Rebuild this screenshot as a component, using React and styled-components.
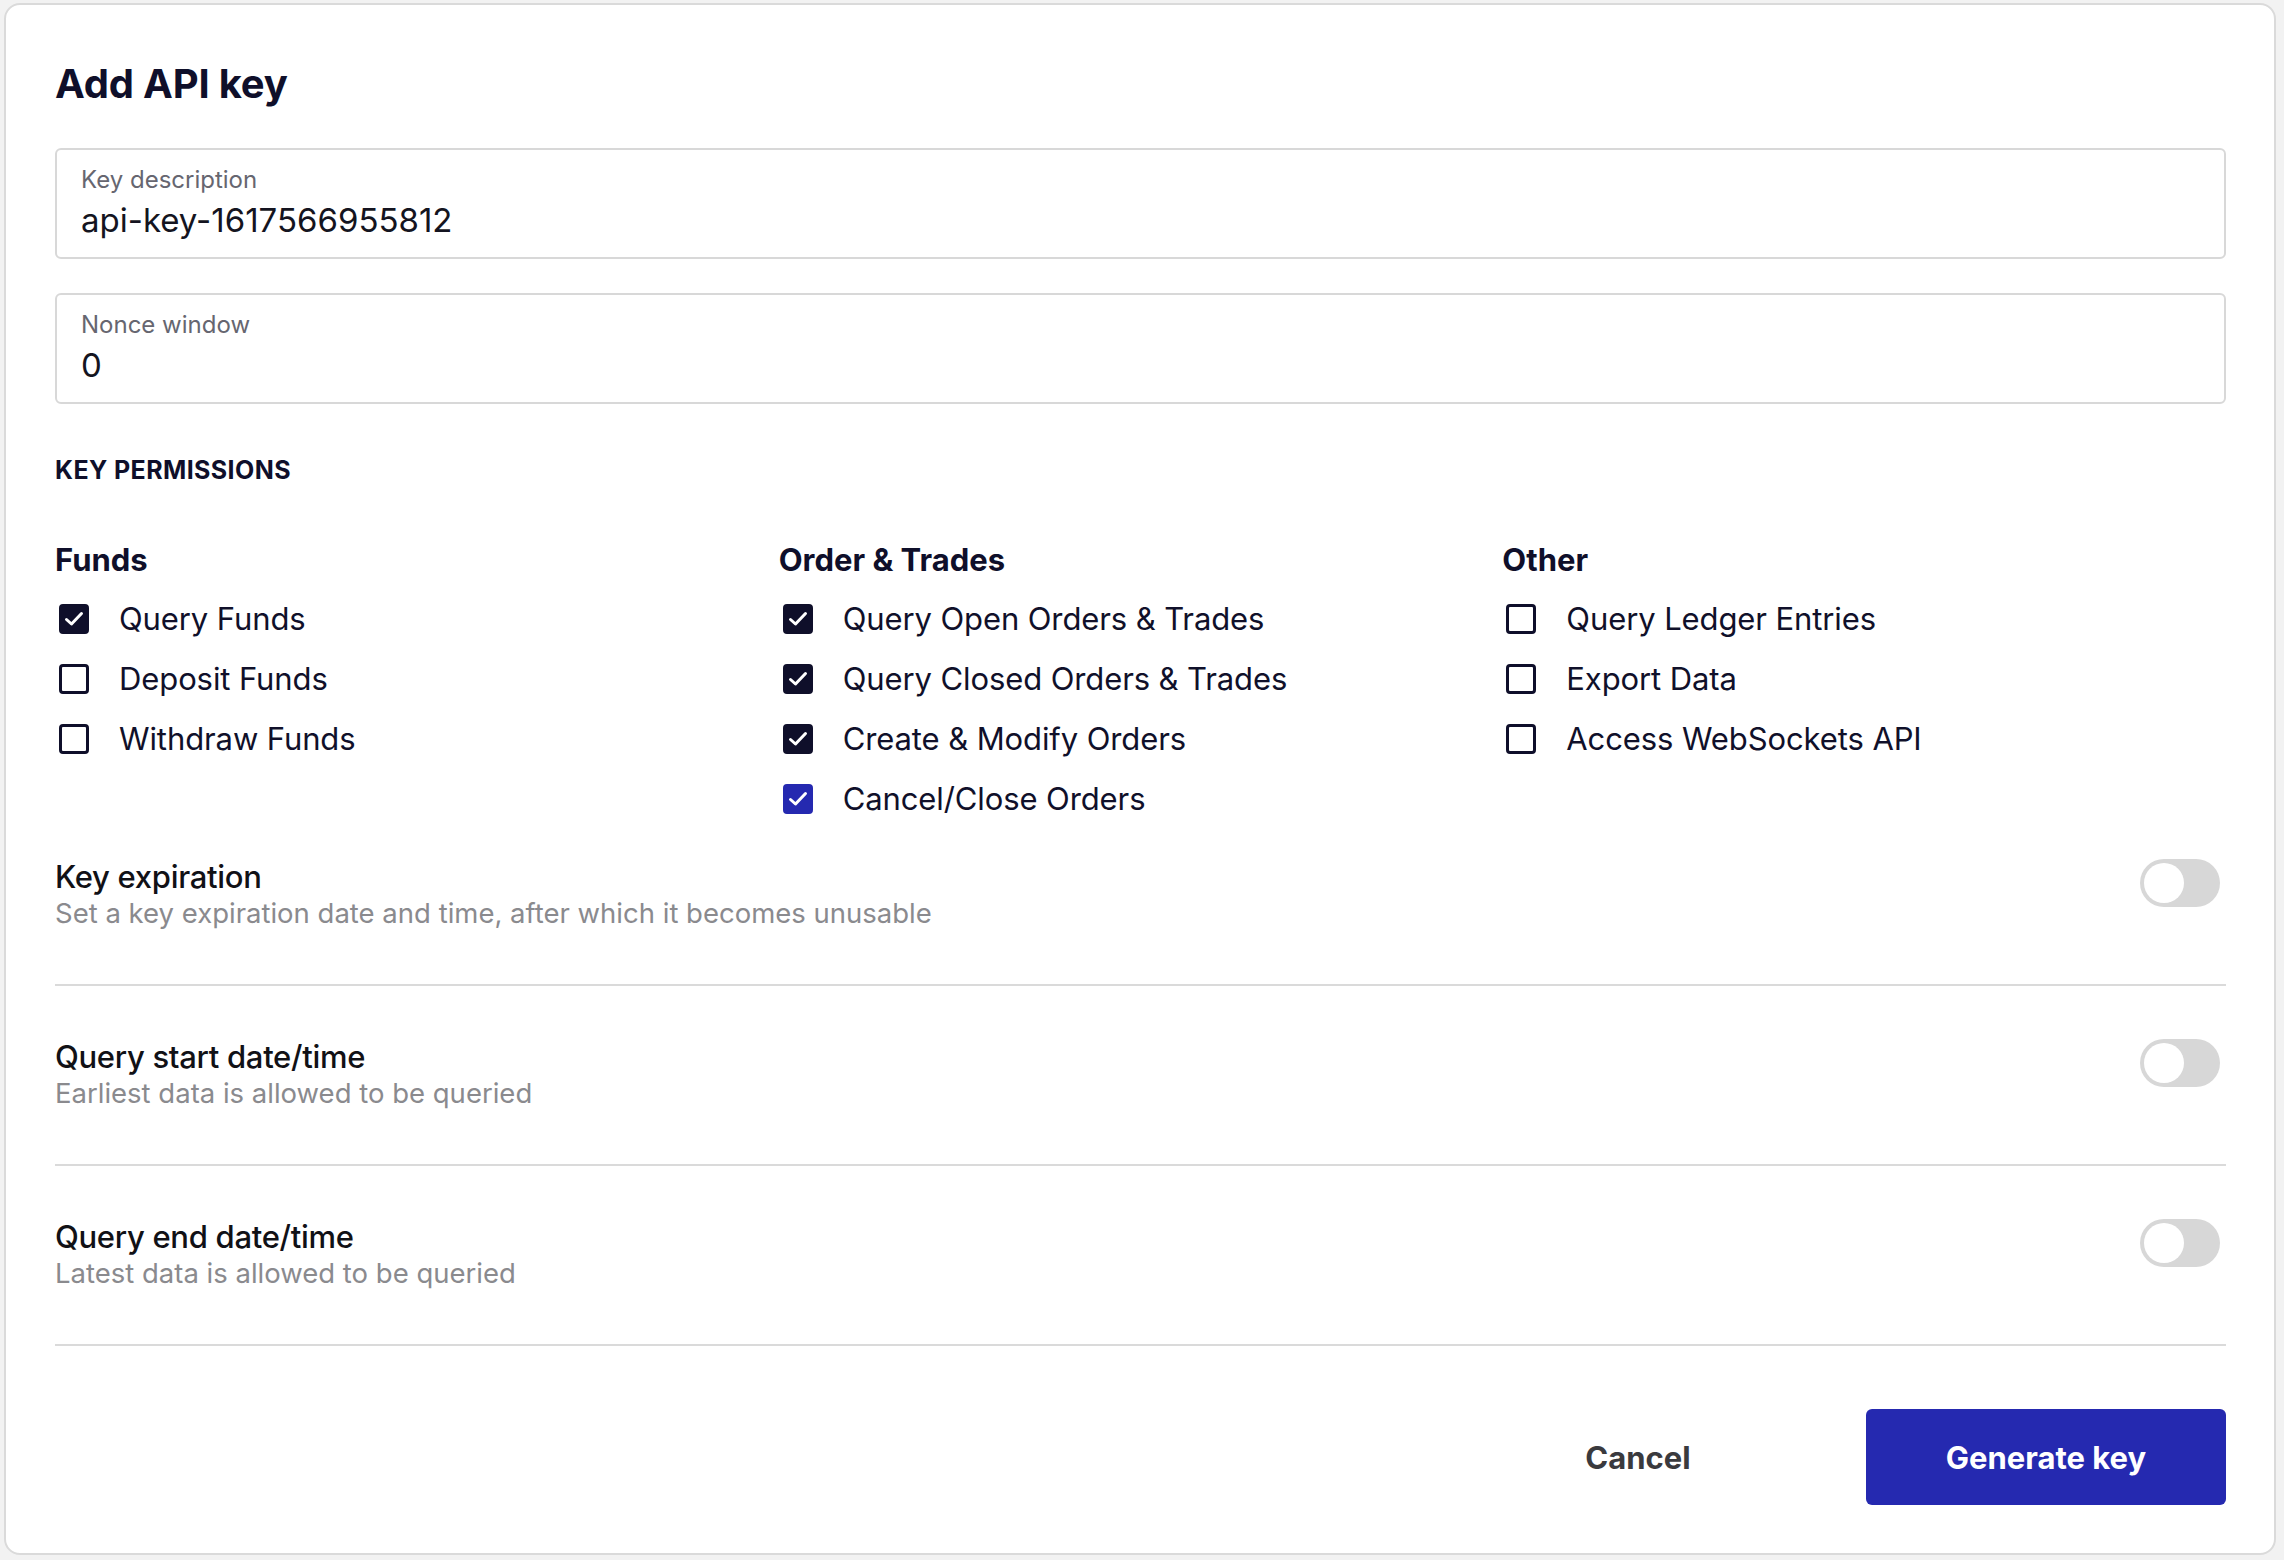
import React from "react";
import styled, { createGlobalStyle } from "styled-components";

const Global = createGlobalStyle`
  html, body { margin: 0; padding: 0; background: #f2f2f2; }
  body { font-family: Inter, "Noto Sans", "Liberation Sans", sans-serif; color: #10102a; }
  * { box-sizing: border-box; }
`;

const Card = styled.div`
  margin: 3px 0 0 4px;
  width: 2272px;
  height: 1552px;
  background: #fff;
  border: 2px solid #dadada;
  border-radius: 16px;
  padding: 57px 48px 0 49px;
  display: flex;
  flex-direction: column;
`;

const Title = styled.h1`
  margin: 0;
  font-size: 40px;
  line-height: 44px;
  font-weight: 700;
  letter-spacing: -0.2px;
  color: #0f0f2a;
`;

const Field = styled.div`
  margin-top: ${(p) => p.$top}px;
  height: 111px;
  border: 2px solid #d8d8d8;
  border-radius: 6px;
  padding: 16px 24px 17px;
  display: flex;
  flex-direction: column;
`;

const FieldLabel = styled.div`
  font-size: 24px;
  line-height: 28px;
  color: #666670;
`;

const FieldValue = styled.div`
  margin-top: 7px;
  font-size: 33px;
  line-height: 38px;
  color: #141420;
`;

const SectionHeading = styled.div`
  margin-top: 51px;
  font-size: 25px;
  line-height: 30px;
  font-weight: 700;
  letter-spacing: 0.4px;
  color: #0f0f2a;
`;

const PermGrid = styled.div`
  margin-top: 57px;
  display: grid;
  grid-template-columns: repeat(3, 1fr);
`;

const PermColumn = styled.div`
  display: flex;
  flex-direction: column;
  gap: 24px;
`;

const ColumnHeader = styled.div`
  font-size: 31px;
  line-height: 36px;
  font-weight: 700;
  color: #0f0f2a;
  margin-bottom: -1px;
`;

const PermRow = styled.label`
  display: flex;
  align-items: center;
  height: 36px;
  gap: 30px;
  font-size: 31px;
  line-height: 36px;
  letter-spacing: -0.1px;
  color: #10102a;
`;

const Box = styled.span`
  margin-left: 4px;
  width: 30px;
  height: 30px;
  flex: none;
  border-radius: 4px;
  border: 3px solid ${(p) => (p.$accent ? "#2529b0" : "#0f0f2a")};
  background: ${(p) =>
    p.$checked ? (p.$accent ? "#2529b0" : "#0f0f2a") : "#fff"};
  display: flex;
  align-items: center;
  justify-content: center;
`;

const ToggleList = styled.div`
  display: flex;
  flex-direction: column;
`;

const ToggleRow = styled.div`
  display: flex;
  justify-content: space-between;
  align-items: flex-start;
  padding: 53px 6px 53px 0;
  border-bottom: 2px solid #dadada;
  &:first-child {
    padding-top: 42px;
  }
`;

const ToggleText = styled.div`
  display: flex;
  flex-direction: column;
`;

const ToggleTitle = styled.div`
  font-size: 31px;
  line-height: 36px;
  font-weight: 500;
  letter-spacing: -0.3px;
  color: #111116;
`;

const ToggleSub = styled.div`
  font-size: 27.5px;
  line-height: 36px;
  color: #8a8a8e;
`;

const Switch = styled.div`
  width: 80px;
  height: 48px;
  border-radius: 24px;
  background: #d7d7d7;
  padding: 4px;
  flex: none;
`;

const Knob = styled.div`
  width: 40px;
  height: 40px;
  border-radius: 50%;
  background: #fff;
`;

const Footer = styled.div`
  padding-top: 63px;
  display: flex;
  justify-content: flex-end;
  gap: 48px;
`;

const Button = styled.button`
  width: 360px;
  height: 96px;
  border: none;
  border-radius: 6px;
  font-family: inherit;
  font-size: 31px;
  font-weight: 700;
  cursor: pointer;
  background: ${(p) => (p.$primary ? "#2529b0" : "transparent")};
  color: ${(p) => (p.$primary ? "#ffffff" : "#3a3a3e")};
`;

const Check = () => (
  <svg width="20" height="16" viewBox="0 0 20 16" fill="none">
    <path
      d="M2.5 8.5 L7.5 13 L17.5 2.5"
      stroke="#fff"
      strokeWidth="3"
      strokeLinecap="round"
      strokeLinejoin="round"
    />
  </svg>
);

const columns = [
  {
    title: "Funds",
    items: [
      { label: "Query Funds", checked: true },
      { label: "Deposit Funds" },
      { label: "Withdraw Funds" },
    ],
  },
  {
    title: "Order & Trades",
    items: [
      { label: "Query Open Orders & Trades", checked: true },
      { label: "Query Closed Orders & Trades", checked: true },
      { label: "Create & Modify Orders", checked: true },
      { label: "Cancel/Close Orders", checked: true, accent: true },
    ],
  },
  {
    title: "Other",
    items: [
      { label: "Query Ledger Entries" },
      { label: "Export Data" },
      { label: "Access WebSockets API" },
    ],
  },
];

const toggles = [
  {
    title: "Key expiration",
    sub: "Set a key expiration date and time, after which it becomes unusable",
  },
  { title: "Query start date/time", sub: "Earliest data is allowed to be queried" },
  { title: "Query end date/time", sub: "Latest data is allowed to be queried" },
];

export default function App() {
  return (
    <>
      <Global />
      <Card>
        <Title>Add API key</Title>
        <Field $top={42}>
          <FieldLabel>Key description</FieldLabel>
          <FieldValue>api-key-1617566955812</FieldValue>
        </Field>
        <Field $top={34}>
          <FieldLabel>Nonce window</FieldLabel>
          <FieldValue>0</FieldValue>
        </Field>
        <SectionHeading>KEY PERMISSIONS</SectionHeading>
        <PermGrid>
          {columns.map((col) => (
            <PermColumn key={col.title}>
              <ColumnHeader>{col.title}</ColumnHeader>
              {col.items.map((it) => (
                <PermRow key={it.label}>
                  <Box $checked={it.checked} $accent={it.accent}>
                    {it.checked && <Check />}
                  </Box>
                  {it.label}
                </PermRow>
              ))}
            </PermColumn>
          ))}
        </PermGrid>
        <ToggleList>
          {toggles.map((t) => (
            <ToggleRow key={t.title}>
              <ToggleText>
                <ToggleTitle>{t.title}</ToggleTitle>
                <ToggleSub>{t.sub}</ToggleSub>
              </ToggleText>
              <Switch>
                <Knob />
              </Switch>
            </ToggleRow>
          ))}
        </ToggleList>
        <Footer>
          <Button>Cancel</Button>
          <Button $primary>Generate key</Button>
        </Footer>
      </Card>
    </>
  );
}
